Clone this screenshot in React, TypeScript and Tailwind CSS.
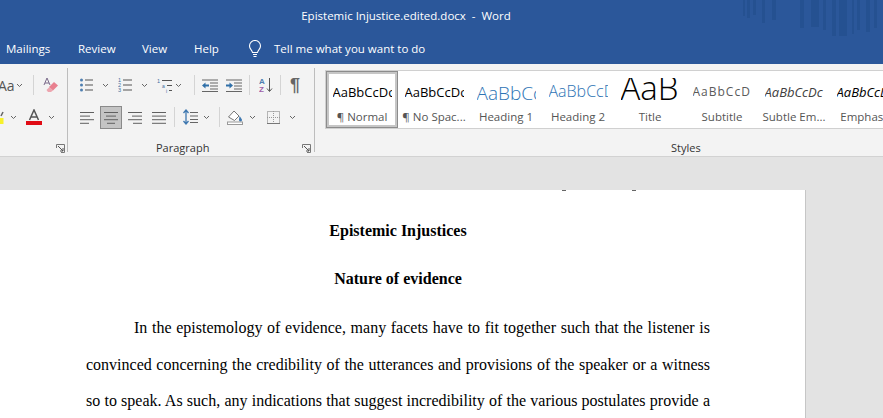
import React from "react";

const ui = { fontFamily: '"Open Sans", "Noto Sans", sans-serif' };

function Chev({ ml = 0 }: { ml?: number }) {
  return (
    <svg width="7" height="5" viewBox="0 0 7 5" className="shrink-0" style={{ marginLeft: ml }}>
      <path d="M1 1l2.5 2.5L6 1" fill="none" stroke="#666" strokeWidth="1" />
    </svg>
  );
}
function Sep({ ml, h = 20 }: { ml: number; h?: number }) {
  return <div className="w-px shrink-0 bg-[#d4d4d4]" style={{ marginLeft: ml, height: h }} />;
}
function Lines({ w, xs, ml = 0 }: { w: number; xs: [number, number][]; ml?: number }) {
  return (
    <svg width={w} height="13" viewBox={`0 0 ${w} 13`} className="shrink-0" style={{ marginLeft: ml }}>
      {xs.map(([a, b], i) => (
        <rect key={i} x={a} y={1 + i * 3.6} width={b - a} height="1" fill="#606060" />
      ))}
    </svg>
  );
}
function Launcher() {
  return (
    <svg width="9" height="9" viewBox="0 0 9 9">
      <path d="M.5 4V.5H8.5V8.5H5" fill="none" stroke="#777" />
      <path d="M2 2l5 5M7 4v3H4" fill="none" stroke="#555" />
    </svg>
  );
}

const styles = [
  { p: "AaBbCcDc", l: "¶ Normal", c: "pt-[5px] text-[13px] text-black", sel: true },
  { p: "AaBbCcDc", l: "¶ No Spac...", c: "pt-[5px] text-[13px] text-black" },
  { p: "AaBbCc", l: "Heading 1", c: "pt-[1px] text-[19px] font-light text-[#2e74b5]" },
  { p: "AaBbCcD", l: "Heading 2", c: "pt-[1px] text-[16px] font-light text-[#2e74b5]" },
  { p: "AaB", l: "Title", c: "-mt-[4px] text-[33px] font-light text-black leading-[28px]" },
  { p: "AaBbCcD", l: "Subtitle", c: "pt-[5px] text-[12px] tracking-[1px] text-[#5a5a5a]" },
  { p: "AaBbCcDc", l: "Subtle Em...", c: "pt-[5px] text-[13px] italic text-[#404040]" },
  { p: "AaBbCcDc", l: "Emphasis", c: "pt-[5px] text-[13px] italic text-black" },
];

const body = [
  { t: "In the epistemology of evidence, many facets have to fit together such that the listener is", c: "pl-[48px]" },
  { t: "convinced concerning the credibility of the utterances and provisions of the speaker or a witness", c: "" },
  { t: "so to speak. As such, any indications that suggest incredibility of the various postulates provide a", c: "" },
];

export default function App() {
  return (
    <div className="relative flex h-[418px] w-[883px] flex-col overflow-hidden bg-[#e3e3e3]">
      {/* Title bar */}
      <div className="relative h-[64px] shrink-0 bg-[#2b579a] text-white" style={ui}>
        <div className="flex h-[31px] items-center justify-center pr-[71px] text-[11.5px]">
          <span className="whitespace-pre">Epistemic Injustice.edited.docx  -  Word</span>
        </div>
        <svg width="140" height="38" viewBox="0 0 140 38" className="absolute right-0 top-0">
          {[
            [0, 2, 16], [4, 3, 18], [10, 3, 15], [19, 3, 23], [29, 4, 20], [57, 4, 28], [68, 8, 27],
            [80, 3, 30], [89, 4, 36], [96, 8, 36], [109, 2, 34], [114, 3, 30], [123, 4, 32], [131, 3, 28],
          ].map(([x, w, h], i) => (
            <rect key={i} x={x} y="0" width={w} height={h} fill="#24508f" opacity="0.85" />
          ))}
        </svg>
        <div className="flex h-[33px] items-center pl-[6px] pt-[3px] text-[11.5px]">
          <span className="w-[72px]">Mailings</span>
          <span className="w-[64px]">Review</span>
          <span className="w-[52px]">View</span>
          <span className="w-[54px]">Help</span>
          <svg width="14" height="18" viewBox="0 0 14 18" fill="none" stroke="#fff" strokeWidth="1.1">
            <path d="M4.5 12.5C4 9.8 1.500 9 1.500 6a5.500 5.500 0 0 1 11 0c0 3-2.500 3.800-3 6.500z" />
            <path d="M5 14.500h4M5.500 16.500h3" />
          </svg>
          <span className="ml-[12px]">Tell me what you want to do</span>
        </div>
      </div>

      {/* Ribbon */}
      <div className="flex h-[93px] shrink-0 border-b border-[#d2d2d2] bg-[#f3f3f3] text-[#444]" style={ui}>
        {/* Font group fragment */}
        <div className="relative mb-[4px] mt-[4px] flex w-[68px] shrink-0 flex-col border-r border-[#bdbdbd]">
          <div className="mt-[5px] flex h-[24px] items-center">
            <span className="-ml-[2px] w-[18px] text-[14px] text-[#555]">Aa</span>
            <Chev ml={0} />
            <Sep ml={10} />
            <svg width="16" height="16" viewBox="0 0 16 16" className="ml-[9px]">
              <path d="M1 8L4 1l3 7M2 6h4" fill="none" stroke="#7a6a8a" strokeWidth="1" />
              <path d="M6 10l5-5 4 3.500-5 5z" fill="#e8808f" />
              <path d="M3.500 13l3-3 3.500 3.500-2 1.500H5z" fill="#eda5af" />
            </svg>
          </div>
          <div className="mt-[8px] flex h-[24px] items-center">
            <svg width="4" height="14" viewBox="0 0 4 14" className="shrink-0">
              <rect x="0" y="8" width="3.500" height="6" fill="#f7f12a" />
              <path d="M1 6l2-4" stroke="#666" strokeWidth="1.500" />
            </svg>
            <Chev ml={6} />
            <svg width="16" height="16" viewBox="0 0 16 16" className="ml-[9px] shrink-0">
              <path d="M3.500 11L8 1l4.500 10M5 8h6" fill="none" stroke="#555" strokeWidth="1.500" />
              <rect x="0" y="12" width="16" height="4" fill="#e00b14" />
            </svg>
            <Chev ml={6} />
          </div>
          <div className="absolute bottom-[-1px] right-[2px]"><Launcher /></div>
        </div>

        {/* Paragraph group */}
        <div className="relative mb-[4px] mt-[4px] flex w-[247px] shrink-0 flex-col border-r border-[#bdbdbd]">
          <div className="mt-[5px] flex h-[24px] items-center pl-[12px]">
            <svg width="14" height="14" viewBox="0 0 14 14" className="shrink-0">
              {[2, 7, 12].map((y) => (
                <g key={y}>
                  <circle cx="1.500" cy={y} r="1.500" fill="#4f7fb0" />
                  <rect x="5" y={y - 0.5} width="8" height="1" fill="#555" />
                </g>
              ))}
            </svg>
            <Chev ml={8} />
            <svg width="15" height="14" viewBox="0 0 15 14" className="ml-[9px] shrink-0">
              {[2, 7, 12].map((y, i) => (
                <g key={y}>
                  <text x="0" y={y + 2} fontSize="5.5" fill="#3f6f9f" fontFamily="Liberation Sans">{i + 1}</text>
                  <rect x="5" y={y - 0.5} width="9" height="1" fill="#555" />
                </g>
              ))}
            </svg>
            <Chev ml={8} />
            <svg width="16" height="15" viewBox="0 0 16 15" className="ml-[9px] shrink-0">
              <text x="0" y="5" fontSize="5.5" fill="#3f6f9f" fontFamily="Liberation Sans">1</text>
              <rect x="5" y="2" width="10" height="1" fill="#555" />
              <text x="5" y="9.5" fontSize="5" fill="#3f6f9f" fontFamily="Liberation Sans">a</text>
              <rect x="10" y="7" width="5" height="1" fill="#555" />
              <text x="9" y="14.5" fontSize="5" fill="#3f6f9f" fontFamily="Liberation Sans">i</text>
              <rect x="12" y="12" width="3" height="1" fill="#555" />
            </svg>
            <Chev ml={2} />
            <Sep ml={12} />
            {[0, 1].map((k) => (
              <svg key={k} width="16" height="13" viewBox="0 0 16 13" className="shrink-0" style={{ marginLeft: k ? 8 : 7 }}>
                {[0.5, 3.5, 6.5, 9.5, 12].map((y, i) => (
                  <rect key={i} x={i === 0 || i === 4 ? 0 : 8} y={y} width={i === 0 || i === 4 ? 16 : 8} height="1" fill="#666" />
                ))}
                {k === 0 ? (
                  <path d="M0 6.500l3.500-3v2H7v2H3.500v2z" fill="#2f6fa8" />
                ) : (
                  <path d="M7 6.500l-3.500-3v2H0v2h3.500v2z" fill="#2f6fa8" />
                )}
              </svg>
            ))}
            <Sep ml={7} />
            <svg width="14" height="16" viewBox="0 0 14 16" className="ml-[9px] shrink-0">
              <text x="0" y="7" fontSize="8" fill="#4f7fb0" fontFamily="Liberation Sans" fontWeight="bold">A</text>
              <text x="0" y="15" fontSize="8" fill="#a05fa8" fontFamily="Liberation Sans" fontWeight="bold">Z</text>
              <path d="M10.500 1v13M8 11.500l2.500 3 2.500-3" fill="none" stroke="#555" strokeWidth="1" />
            </svg>
            <Sep ml={7} />
            <span className="ml-[9px] text-[18px] font-bold leading-none text-[#666]" style={{ fontFamily: '"Liberation Sans", sans-serif' }}>¶</span>
          </div>
          <div className="mt-[8px] flex h-[24px] items-center pl-[12px]">
            <Lines w={14} xs={[[0, 14], [0, 10], [0, 14], [0, 9]]} />
            <div className="ml-[6px] flex h-[23px] w-[22px] shrink-0 items-center justify-center border border-[#8a8a8a] bg-[#c4c4c4]">
              <Lines w={14} xs={[[0, 14], [2, 12], [0, 14], [3, 11]]} />
            </div>
            <Lines w={14} xs={[[0, 14], [4, 14], [0, 14], [5, 14]]} ml={6} />
            <Lines w={14} xs={[[0, 14], [0, 14], [0, 14], [0, 14]]} ml={10} />
            <Sep ml={8} />
            <svg width="15" height="16" viewBox="0 0 15 16" className="ml-[8px] shrink-0">
              <path d="M3 1v14M.5 4L3 1l2.500 3M.5 12L3 15l2.500-3" fill="none" stroke="#3f78b0" strokeWidth="1.300" />
              {[3, 6.5, 10, 13].map((y) => (
                <rect key={y} x="7" y={y} width="8" height="1" fill="#666" />
              ))}
            </svg>
            <Chev ml={5} />
            <Sep ml={9} />
            <svg width="16" height="16" viewBox="0 0 16 16" className="ml-[7px] shrink-0">
              <path d="M1.500 8L7 2l5 5-4.500 4.500z" fill="#fff" stroke="#777" />
              <path d="M12.500 7c1.500 2 2.500 3 2.500 4a1.500 1.500 0 0 1-3 0c0-1 .3-2.500.5-4z" fill="#3f78b0" />
              <rect x="0.500" y="13" width="15" height="2.500" fill="#fff" stroke="#999" />
            </svg>
            <Chev ml={6} />
            <svg width="13" height="13" viewBox="0 0 13 13" className="ml-[11px] shrink-0">
              <rect x=".5" y=".5" width="12" height="12" fill="none" stroke="#777" strokeDasharray="1 1" />
              <path d="M6.500 0v13M0 6.500h13" stroke="#999" strokeDasharray="1 1" />
              <rect x="0" y="12" width="13" height="1" fill="#777" />
            </svg>
            <Chev ml={9} />
          </div>
          <div className="absolute bottom-[-4px] left-[88px] text-[11px] text-[#333]">Paragraph</div>
          <div className="absolute bottom-[-1px] right-[3px]"><Launcher /></div>
        </div>

        {/* Styles group */}
        <div className="relative min-w-0 flex-1 pl-[10px] pt-[6px]">
          <div className="flex h-[59px] overflow-hidden border-y border-l border-[#d0d0d0] bg-white">
            {styles.map((s) => (
              <div
                key={s.l}
                className={`flex h-[57px] w-[72px] shrink-0 flex-col items-center border-[3px] ${
                  s.sel ? "border-[#c6c6c6] outline outline-1 -outline-offset-1 outline-[#8c8c8c]" : "border-transparent"
                }`}
              >
                <div className="mt-[4px] h-[27px] w-[59px] overflow-hidden">
                  <div className={`whitespace-nowrap ${s.c}`}>{s.p}</div>
                </div>
                <div className="mt-[4px] whitespace-nowrap text-[11.5px] leading-[16px] text-[#555]">{s.l}</div>
              </div>
            ))}
          </div>
          <div className="mt-[11px] pl-[346px] text-[11px] leading-[16px] text-[#333]">Styles</div>
        </div>
      </div>

      {/* Document canvas */}
      <div className="min-h-0 flex-1 pt-[33px]">
        <div
          className="relative h-[300px] w-[806px] border-r border-[#c6c6c6] bg-white pl-[86px] pr-[95px] text-[16px] text-black"
          style={{ fontFamily: '"Liberation Serif", serif' }}
        >
          {/* descender fragments of the line scrolled off above the page top */}
          <div className="absolute left-[562px] top-0 h-[1px] w-[4px] bg-[#666]" />
          <div className="absolute left-[632px] top-0 h-[1px] w-[4px] bg-[#666]" />
          <div className="pt-[29px] text-center font-bold leading-[24px]">Epistemic Injustices</div>
          <div className="mt-[24px] text-center font-bold leading-[24px]">Nature of evidence</div>
          <div className="mt-[19px]">
            {body.map((l) => (
              <div key={l.t} className={`h-[36.5px] whitespace-nowrap leading-[36.5px] [text-align-last:justify] ${l.c}`}>
                {l.t}
              </div>
            ))}
          </div>
        </div>
      </div>
    </div>
  );
}
